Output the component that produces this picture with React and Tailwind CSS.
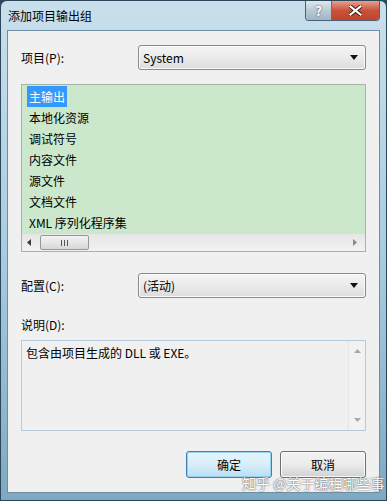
import React from "react";

const font = { fontFamily: '"Noto Sans CJK SC", "Noto Sans", sans-serif' };

const items = ["主输出", "本地化资源", "调试符号", "内容文件", "源文件", "文档文件", "XML 序列化程序集"];

const Combo = ({ value }) => (
  <div className="w-[228px] h-[25px] rounded-[3px] border border-[#8a8a8a] bg-gradient-to-b from-[#f4f4f4] via-[#ebebeb] to-[#dcdcdc] flex items-center pl-[4px] pr-[7px] shadow-[inset_0_0_0_1px_#fbfbfb]">
    <span className="flex-1 text-[12px] leading-none text-black">{value}</span>
    <svg width="8" height="5" viewBox="0 0 8 5">
      <path d="M0 0H8L4 5Z" fill="#111" />
    </svg>
  </div>
);

const Button = ({ label, primary }) => (
  <div
    className={
      "w-[86px] h-[27px] rounded-[3px] flex items-center justify-center text-[12px] text-black " +
      (primary
        ? "border border-[#3c7fb1] bg-gradient-to-b from-[#e5f4fc] via-[#d9eefa] to-[#b8dff4] shadow-[inset_0_0_0_1px_#9ad3f2]"
        : "border border-[#707070] bg-gradient-to-b from-[#f3f3f3] via-[#ebebeb] to-[#d2d2d2] shadow-[inset_0_0_0_1px_#fcfcfc]")
    }
  >
    {label}
  </div>
);

export default function App() {
  return (
    <div style={font} className="relative w-[387px] h-[501px] overflow-hidden bg-[#2f4a5e]">
      <div className="w-[387px] h-[501px] rounded-t-[7px] border border-[#2c4759] bg-gradient-to-b from-[#c9dfec] via-[#a9cde0] to-[#7fa9c2] flex flex-col">
        {/* title bar */}
        <div className="h-[29px] flex items-start relative">
          <span className="pl-[7px] pt-[7px] text-[12px] leading-[16px] text-black">添加项目输出组</span>
          <div className="ml-auto mr-[6px] flex h-[20px] rounded-b-[4px] border border-t-0 border-[#4b6173] overflow-hidden">
            <div className="w-[26px] h-full bg-gradient-to-b from-[#dfe8ee] via-[#b9cad6] to-[#9fb6c6] flex items-center justify-center border-r border-[#5d7385]">
              <span className="text-[13px] font-bold leading-none text-white [text-shadow:0_0_2px_#334]">?</span>
            </div>
            <div className="w-[47px] h-full bg-gradient-to-b from-[#e8a08f] via-[#c8523b] to-[#c1432a] flex items-center justify-center">
              <svg width="13" height="11" viewBox="0 0 13 11">
                <path d="M1.5 1.5L11.5 9.5M11.5 1.5L1.5 9.5" stroke="#3a1a14" strokeWidth="4" strokeLinecap="square" />
                <path d="M1.5 1.5L11.5 9.5M11.5 1.5L1.5 9.5" stroke="#fff" strokeWidth="2.2" strokeLinecap="square" />
              </svg>
            </div>
          </div>
        </div>
        {/* client */}
        <div className="mx-[6px] h-[463px] border border-[#6f8ea3] bg-[#f0f0f0] flex flex-col px-[13px] text-[12px] text-black">
          <div className="mt-[14px] flex items-center justify-between">
            <span className="leading-none">项目(P):</span>
            <Combo value="System" />
          </div>
          {/* list box */}
          <div className="mt-[14px] h-[168px] border border-[#a4b5a4] bg-[#cce8cc] flex flex-col">
            <div className="flex-1 pt-[1px] pl-[5px]">
              {items.map((t, i) => (
                <div key={t} className="h-[21px] flex items-center">
                  <span
                    className={
                      "px-[2px] h-[21px] flex items-center leading-none " +
                      (i === 0 ? "bg-[#3399ff] text-white" : "")
                    }
                  >
                    {t}
                  </span>
                </div>
              ))}
            </div>
            <div className="h-[17px] bg-gradient-to-b from-[#e6e6e6] to-[#f2f2f2] flex items-center px-[5px]">
              <svg width="4" height="7" viewBox="0 0 4 7">
                <path d="M4 0V7L0 3.5Z" fill="#3b3b3b" />
              </svg>
              <div className="ml-[9px] w-[49px] h-[15px] rounded-[2px] border border-[#979797] bg-gradient-to-b from-[#f3f3f3] via-[#e6e6e6] to-[#d6d6d6] flex items-center justify-center gap-[2px]">
                <span className="w-px h-[6px] bg-[#555]" />
                <span className="w-px h-[6px] bg-[#555]" />
                <span className="w-px h-[6px] bg-[#555]" />
              </div>
              <svg className="ml-auto mr-[3px]" width="4" height="7" viewBox="0 0 4 7">
                <path d="M0 0V7L4 3.5Z" fill="#8a8a8a" />
              </svg>
            </div>
          </div>
          <div className="mt-[21px] flex items-center justify-between">
            <span className="leading-none">配置(C):</span>
            <Combo value="(活动)" />
          </div>
          <span className="mt-[21px] leading-none">说明(D):</span>
          <div className="mt-[9px] h-[91px] border border-[#b5cadb] bg-[#f0f0f0] flex">
            <div className="flex-1 pl-[4px] pt-[6px] leading-none">包含由项目生成的 DLL 或 EXE。</div>
            <div className="w-[17px] bg-[#f2f2f2] border-l border-[#e6e6e6] flex flex-col items-center justify-between py-[8px]">
              <svg width="7" height="4" viewBox="0 0 7 4">
                <path d="M0 4H7L3.5 0Z" fill="#a8a8a8" />
              </svg>
              <svg width="7" height="4" viewBox="0 0 7 4">
                <path d="M0 0H7L3.5 4Z" fill="#a8a8a8" />
              </svg>
            </div>
          </div>
          <div className="mt-[20px] flex justify-end gap-[8px]">
            <Button label="确定" primary />
            <Button label="取消" />
          </div>
        </div>
      </div>
      <span className="absolute left-[242px] top-[474px] text-[14px] leading-[18px] text-white [text-shadow:0_0_1px_#555,0_0_2px_#777]">
        知乎 @关于编程哪些事
      </span>
    </div>
  );
}
